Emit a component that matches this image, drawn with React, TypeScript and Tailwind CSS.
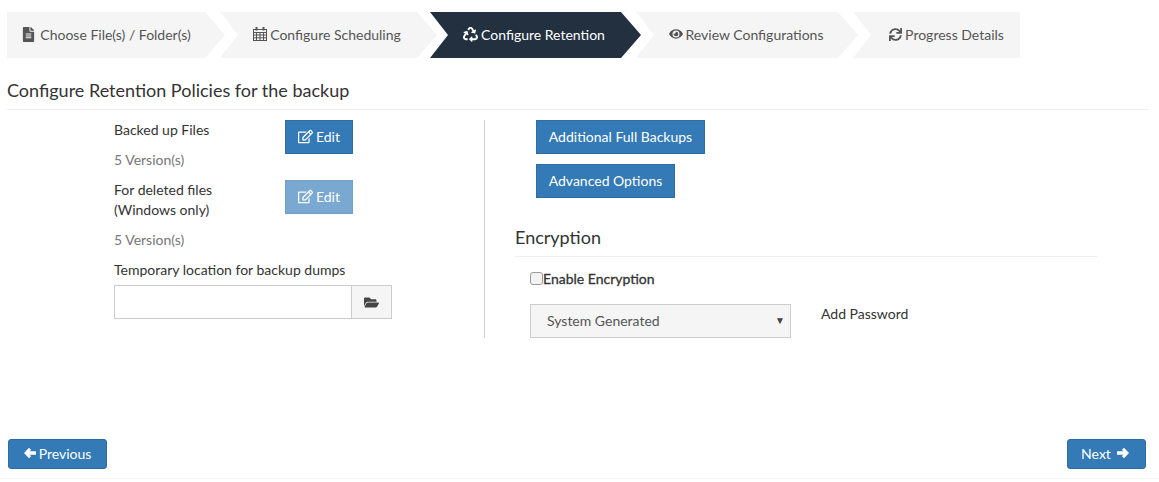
import type { ReactNode } from "react";
import { FaEye, FaFileAlt, FaFolderOpen, FaRecycle, FaRegEdit, FaSync } from "react-icons/fa";

function CalendarIcon() {
  return (
    <svg width="14" height="14" viewBox="0 0 14 14" fill="none" stroke="currentColor" strokeWidth="1">
      <rect x="0.5" y="2.5" width="13" height="11" />
      <path d="M0 5.5h14M0 8h14M0 10.8h14M3.5 5v9M7 5v9M10.5 5v9" />
      <path d="M3.5 0v3.5M10.5 0v3.5" strokeWidth="2" />
    </svg>
  );
}

function ArrowLeft() {
  return (
    <svg width="12" height="12" viewBox="0 0 12 12" fill="currentColor">
      <polygon points="0,6 5,0.8 7.2,3 5.4,4.3 12,4.3 12,7.7 5.4,7.7 7.2,9 5,11.2" />
    </svg>
  );
}

function ArrowRight() {
  return (
    <svg width="12" height="12" viewBox="0 0 12 12" fill="currentColor">
      <polygon points="12,6 7,0.8 4.8,3 6.6,4.3 0,4.3 0,7.7 6.6,7.7 4.8,9 7,11.2" />
    </svg>
  );
}

function Step({ icon, label, className }: { icon: ReactNode; label: string; className: string }) {
  return (
    <div className={`h-[46px] pb-[2px] flex items-center justify-center gap-[3px] text-[14px] ${className}`}>
      {icon}
      <span>{label}</span>
    </div>
  );
}

function BlueButton({ children, className = "" }: { children: ReactNode; className?: string }) {
  return (
    <button className={`h-[34px] pb-[2px] flex items-center justify-center gap-[3px] bg-[#337ab7] border border-[#2e6da4] text-white text-[14px] ${className}`}>
      {children}
    </button>
  );
}

export default function App() {
  return (
    <div className="w-[1159px] h-[482px] bg-white overflow-hidden text-[#333] text-[14px] font-['Lato','Open_Sans',sans-serif] flex flex-col">
      <div className="flex pt-3 pl-[7px]">
        <Step
          icon={<FaFileAlt className="text-[15px] mr-px" />}
          label="Choose File(s) / Folder(s)"
          className="w-[218px] pr-[20px] text-[#555] bg-[#f5f5f5] [clip-path:polygon(0_0,198px_0,218px_50%,198px_100%,0_100%)]"
        />
        <Step
          icon={<CalendarIcon />}
          label="Configure Scheduling"
          className="w-[217px] -ml-[5px] pr-[3px] text-[#555] bg-[#f5f5f5] [clip-path:polygon(0_0,197px_0,217px_50%,197px_100%,0_100%,18px_50%)]"
        />
        <Step
          icon={<FaRecycle className="text-[15px]" />}
          label="Configure Retention"
          className="w-[211px] -ml-[7px] pr-[3px] text-white bg-[#22303f] [clip-path:polygon(0_0,191px_0,211px_50%,191px_100%,0_100%,18px_50%)]"
        />
        <Step
          icon={<FaEye className="text-[14px]" />}
          label="Review Configurations"
          className="w-[222px] -ml-[5px] pr-[2px] text-[#555] bg-[#f5f5f5] [clip-path:polygon(0_0,202px_0,222px_50%,202px_100%,0_100%,18px_50%)]"
        />
        <Step
          icon={<FaSync className="text-[13px]" />}
          label="Progress Details"
          className="w-[167px] -ml-[5px] pl-[20px] text-[#555] bg-[#f5f5f5] rounded-r-[2px] [clip-path:polygon(0_0,100%_0,100%_100%,0_100%,18px_50%)]"
        />
      </div>

      <h4 className="mt-[22px] mx-[7px] w-[1141px] h-[30px] text-[18px] leading-[20px] border-b border-[#eee] text-[#333]">
        Configure Retention Policies for the backup
      </h4>

      <div className="flex mt-[10px]">
        <div className="w-[371px] h-[218px] ml-[114px] border-r border-[#d5ccc6] shrink-0">
          <div className="flex h-[30px]">
            <div className="w-[171px] leading-[20px]">Backed up Files</div>
            <BlueButton className="w-[68px]">
              <FaRegEdit className="text-[15px]" /> Edit
            </BlueButton>
          </div>
          <div className="h-[30px] leading-[20px] text-[#777]">5 Version(s)</div>
          <div className="flex h-[50px]">
            <div className="w-[171px] leading-[20px]">
              For deleted files
              <br />
              (Windows only)
            </div>
            <BlueButton className="w-[68px] opacity-65">
              <FaRegEdit className="text-[15px]" /> Edit
            </BlueButton>
          </div>
          <div className="h-[30px] leading-[20px] text-[#777]">5 Version(s)</div>
          <div className="h-[25px] leading-[20px]">Temporary location for backup dumps</div>
          <div className="flex w-[278px] h-[34px]">
            <div className="flex-1 border border-[#ccc] bg-white" />
            <div className="w-[41px] -ml-px border border-[#ccc] bg-[#f5f5f5] flex items-center justify-center text-[#444]">
              <FaFolderOpen className="text-[15px]" />
            </div>
          </div>
        </div>

        <div className="ml-[30px] w-[582px]">
          <div className="pl-[21px] flex flex-col items-start gap-[10px]">
            <BlueButton className="w-[169px]">Additional Full Backups</BlueButton>
            <BlueButton className="w-[139px]">Advanced Options</BlueButton>
          </div>
          <h4 className="mt-[29px] h-[30px] text-[18px] leading-[20px] border-b border-[#eee]">Encryption</h4>
          <label className="mt-[13px] ml-[15px] flex items-center h-[16px] text-[14px] [-webkit-text-stroke:0.3px_#333]">
            <span className="w-[13px] h-[13px] border border-[#999] rounded-[3px] bg-[#f3f3f3]" />
            <span>Enable Encryption</span>
          </label>
          <div className="mt-[18px] ml-[15px] flex items-start">
            <div className="w-[261px] h-[34px] pb-[2px] border border-[#ccc] bg-[#f5f5f5] flex items-center justify-between pl-4 pr-[5px] text-[#555]">
              <span>System Generated</span>
              <span className="text-[10px] text-[#444]">▼</span>
            </div>
            <span className="ml-[30px] leading-[20px]">Add Password</span>
          </div>
        </div>
      </div>

      <div className="flex justify-between mt-[101px] ml-2 mr-[13px]">
        <button className="w-[99px] h-[30px] pb-[2px] rounded-[3px] bg-[#337ab7] border border-[#2e6da4] text-white text-[14px] flex items-center justify-center gap-[3px]">
          <ArrowLeft /> Previous
        </button>
        <button className="w-[79px] h-[30px] pb-[2px] pr-[3px] rounded-[3px] bg-[#337ab7] border border-[#2e6da4] text-white text-[14px] flex items-center justify-center gap-[6px]">
          Next <ArrowRight />
        </button>
      </div>
      <div className="mt-[9px] border-t border-[#f7f7f7]" />
    </div>
  );
}
